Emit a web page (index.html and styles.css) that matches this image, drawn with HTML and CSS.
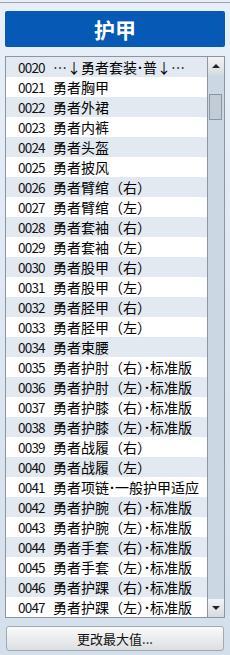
FILE: index.html
```html
<!DOCTYPE html>
<html lang="zh-CN">
<head>
  <meta charset="UTF-8" />
  <meta name="viewport" content="width=device-width, initial-scale=1.0" />
  <title>护甲</title>
  <link rel="stylesheet" href="styles.css">
</head>
<body>
  <div class="panel">
    <div class="title">护甲</div>

    <div class="list">
      <div class="rows">
        <div class="row"><span class="num">0020</span><span class="name">…↓勇者套装<i class="dot">·</i>普↓…</span></div>
        <div class="row"><span class="num">0021</span><span class="name">勇者胸甲</span></div>
        <div class="row"><span class="num">0022</span><span class="name">勇者外裙</span></div>
        <div class="row"><span class="num">0023</span><span class="name">勇者内裤</span></div>
        <div class="row"><span class="num">0024</span><span class="name">勇者头盔</span></div>
        <div class="row"><span class="num">0025</span><span class="name">勇者披风</span></div>
        <div class="row"><span class="num">0026</span><span class="name">勇者臂绾（右）</span></div>
        <div class="row"><span class="num">0027</span><span class="name">勇者臂绾（左）</span></div>
        <div class="row"><span class="num">0028</span><span class="name">勇者套袖（右）</span></div>
        <div class="row"><span class="num">0029</span><span class="name">勇者套袖（左）</span></div>
        <div class="row"><span class="num">0030</span><span class="name">勇者股甲（右）</span></div>
        <div class="row"><span class="num">0031</span><span class="name">勇者股甲（左）</span></div>
        <div class="row"><span class="num">0032</span><span class="name">勇者胫甲（右）</span></div>
        <div class="row"><span class="num">0033</span><span class="name">勇者胫甲（左）</span></div>
        <div class="row"><span class="num">0034</span><span class="name">勇者束腰</span></div>
        <div class="row"><span class="num">0035</span><span class="name">勇者护肘（右）<i class="dot">·</i>标准版</span></div>
        <div class="row"><span class="num">0036</span><span class="name">勇者护肘（左）<i class="dot">·</i>标准版</span></div>
        <div class="row"><span class="num">0037</span><span class="name">勇者护膝（右）<i class="dot">·</i>标准版</span></div>
        <div class="row"><span class="num">0038</span><span class="name">勇者护膝（左）<i class="dot">·</i>标准版</span></div>
        <div class="row"><span class="num">0039</span><span class="name">勇者战履（右）</span></div>
        <div class="row"><span class="num">0040</span><span class="name">勇者战履（左）</span></div>
        <div class="row"><span class="num">0041</span><span class="name">勇者项链<i class="dot">·</i>一般护甲适应</span></div>
        <div class="row"><span class="num">0042</span><span class="name">勇者护腕（右）<i class="dot">·</i>标准版</span></div>
        <div class="row"><span class="num">0043</span><span class="name">勇者护腕（左）<i class="dot">·</i>标准版</span></div>
        <div class="row"><span class="num">0044</span><span class="name">勇者手套（右）<i class="dot">·</i>标准版</span></div>
        <div class="row"><span class="num">0045</span><span class="name">勇者手套（左）<i class="dot">·</i>标准版</span></div>
        <div class="row"><span class="num">0046</span><span class="name">勇者护踝（右）<i class="dot">·</i>标准版</span></div>
        <div class="row"><span class="num">0047</span><span class="name">勇者护踝（左）<i class="dot">·</i>标准版</span></div>
      </div>
      <div class="scroll">
        <div class="arrow up"></div>
        <div class="track"><div class="thumb"></div></div>
        <div class="arrow down"></div>
      </div>
    </div>

    <button class="max-btn">更改最大值...</button>
  </div>
</body>
</html>
```

FILE: styles.css
```css
html, body {
  margin: 0;
  padding: 0;
  height: 100%;
}
body {
  background: linear-gradient(#e8eff9, #d3dfeb);
  font-family: "Noto Sans CJK SC", "Noto Sans", sans-serif;
  color: #000;
  overflow: hidden;
}
.panel {
  margin-top: 2px;
  border-top: 1px solid #9aa4ae;
  padding: 8px 5px 0 5px;
  display: flex;
  flex-direction: column;
}
.title {
  height: 36px;
  background: #0659b4;
  border-radius: 2px;
  color: white;
  font-size: 21px;
  font-weight: bold;
  line-height: 36px;
  text-align: center;
}
.list {
  margin-top: 9px;
  height: 560px;
  border: 1px solid #8b96a2;
  display: flex;
  background: white;
}
.rows {
  flex: 1;
  overflow: hidden;
}
.row {
  height: 20px;
  line-height: 20px;
  padding-left: 12px;
  font-size: 14px;
  white-space: nowrap;
  overflow: hidden;
}
.row:nth-child(odd) {
  background: #e3e9f0;
}
.num {
  display: inline-block;
  width: 35px;
  font-size: 13.5px;
  letter-spacing: -0.8px;
  color: #111;
}
.dot {
  font-style: normal;
  font-family: "Noto Sans", sans-serif;
  font-weight: bold;
  padding: 0 1px;
}
.scroll {
  width: 16px;
  border-left: 1px solid #8b96a2;
  background: #cbd7e3;
  display: flex;
  flex-direction: column;
}
.arrow {
  height: 18px;
  background: linear-gradient(#f2f4f6, #d6dbe0);
  display: flex;
  justify-content: center;
  align-items: center;
}
.arrow::after {
  content: "";
  border-left: 4px solid transparent;
  border-right: 4px solid transparent;
}
.up::after {
  border-bottom: 4px solid #222;
}
.down::after {
  border-top: 4px solid #222;
}
.track {
  flex: 1;
  padding-top: 19px;
}
.thumb {
  margin-left: 1px;
  width: 11px;
  height: 24px;
  background: #c2ccd6;
  border: 1px solid #8b96a2;
}
.max-btn {
  margin: 8px 1px 0 1px;
  height: 25px;
  border: 1px solid #a3a9b0;
  border-radius: 3px;
  background: linear-gradient(#fafafa, #dcdfe2);
  font-family: "Noto Sans CJK SC", sans-serif;
  font-size: 13px;
  color: #111;
  padding: 0;
}
```
